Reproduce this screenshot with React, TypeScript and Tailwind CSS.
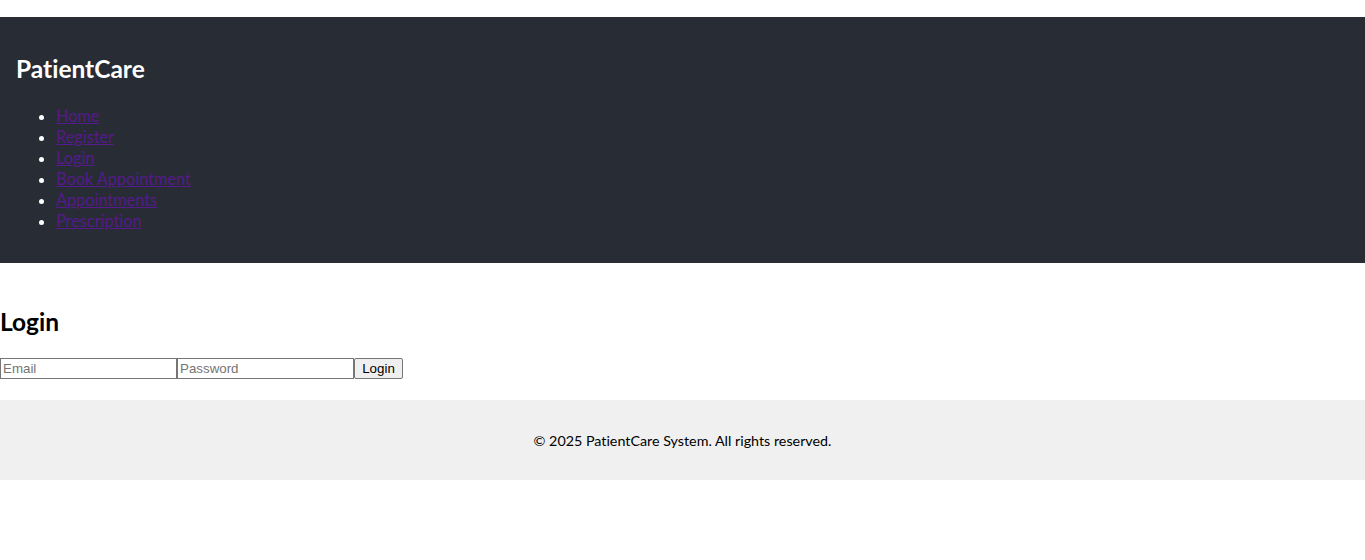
export default function App() {
  const links = ['Home', 'Register', 'Login', 'Book Appointment', 'Appointments', 'Prescription'];

  return (
    <div className="min-h-[560px] bg-white pt-[17px] font-['Lato',sans-serif] text-black [font-variant-ligatures:none]">
      <header className="bg-[#282c34] px-4 pt-4 pb-4 text-white">
        <h2 className="mt-5 mb-5 text-[24.5px] leading-8 font-bold">PatientCare</h2>
        <ul className="mb-4 list-disc pl-10 text-[16.3px] leading-[21px]">
          {links.map((l) => (
            <li key={l}>
              <a href="#" className="text-[#551a8b] underline">
                {l}
              </a>
            </li>
          ))}
        </ul>
      </header>

      <main className="pt-[43px] pb-[21px]">
        <h2 className="text-[24.5px] leading-8 font-bold">Login</h2>
        <form className="mt-5 flex font-['Liberation_Sans',Arial,sans-serif] text-[13.33px]">
          <input
            placeholder="Email"
            className="h-[21px] w-[177px] border border-[#767676] px-[2px] placeholder:text-[#757575]"
          />
          <input
            type="password"
            placeholder="Password"
            className="h-[21px] w-[177px] border border-[#767676] px-[2px] placeholder:text-[#757575]"
          />
          <button
            type="button"
            className="h-[21px] w-[49px] rounded-[2px] border border-[#767676] bg-[#efefef] text-black"
          >
            Login
          </button>
        </form>
      </main>

      <footer className="flex h-[80px] items-center justify-center bg-[#f0f0f0] pt-[2px] text-[14.3px]">
        <p>© 2025 PatientCare System. All rights reserved.</p>
      </footer>
    </div>
  );
}
